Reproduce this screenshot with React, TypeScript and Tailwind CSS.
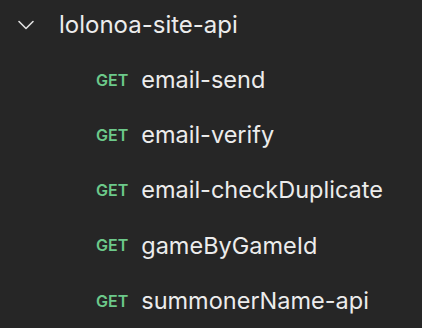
import { ChevronDown } from 'lucide-react';

const endpoints = ['email-send', 'email-verify', 'email-checkDuplicate', 'gameByGameId', 'summonerName-api'];

export default function App() {
    return (
        <div className="w-[422px] h-[328px] bg-[#262626] overflow-hidden font-['Inter',sans-serif] text-[#ececec]">
            <div className="flex items-center h-[50px] pl-[12px]">
                <ChevronDown size={28} strokeWidth={1.4} className="text-[#e0e0e0]" />
                <span className="ml-[19px] text-[24px] leading-none">lolonoa-site-api</span>
            </div>
            <ul className="mt-[2px]">
                {endpoints.map((name) => (
                    <li key={name} className="flex items-center h-[55.25px] pl-[96px]">
                        <span className="text-[16px] font-semibold text-[#6cc98a]">GET</span>
                        <span className="ml-[13px] text-[23.5px] leading-none">{name}</span>
                    </li>
                ))}
            </ul>
        </div>
    );
}
